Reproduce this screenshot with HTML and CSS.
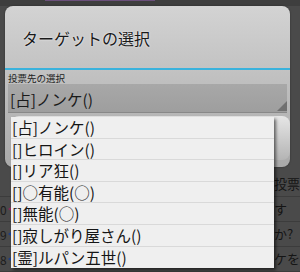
FILE: index.html
```html
<!DOCTYPE html>
<html lang="ja">
<head>
  <meta charset="UTF-8" />
  <title>ターゲットの選択</title>
  <link rel="stylesheet" href="styles.css">
</head>
<body>

  <div class="page">
    <div class="topbar"><span class="tab"></span></div>
    <div class="rows">
      <div class="row"><span class="num"></span><span class="note">投票</span></div>
      <div class="row"><span class="num">0<i class="tri pink"></i></span><span class="note">す</span></div>
      <div class="row"><span class="num">9<i class="tri blue"></i></span><span class="note">か?</span></div>
      <div class="row"><span class="num">8<i class="tri blue"></i></span><span class="note">ケを</span></div>
    </div>
  </div>

  <div class="dialog">
    <div class="dialog-title">ターゲットの選択</div>
    <div class="field-label">投票先の選択</div>
    <div class="spinner">[占]ノンケ()<span class="corner"></span></div>
    <div class="ok-button"></div>
  </div>

  <ul class="dropdown">
    <li>[占]ノンケ()</li>
    <li>[]ヒロイン()</li>
    <li>[]リア狂()</li>
    <li>[]○有能(○)</li>
    <li>[]無能(○)</li>
    <li>[]寂しがり屋さん()</li>
    <li>[霊]ルパン五世()</li>
  </ul>

</body>
</html>
```

FILE: styles.css
```css
body {
  margin: 0;
  width: 300px;
  height: 272px;
  overflow: hidden;
  background: #4a4a4a;
  font-family: "Noto Sans CJK JP", "Noto Sans", sans-serif;
  color: #111;
  position: relative;
}
.page {
  color: #1c1c1c;
}
.topbar {
  height: 6px;
  background: #3e3e3e;
}
.tab {
  display: block;
  margin-left: 45px;
  width: 110px;
  height: 1px;
  background: #6a4f7a;
}
.rows {
  padding-top: 166px;
}
.row {
  height: 24px;
  display: flex;
  justify-content: space-between;
  align-items: center;
  border-bottom: 1px solid #3c3c3c;
  font-size: 13px;
}
.num {
  display: flex;
  align-items: center;
  font-size: 12px;
}
.tri {
  width: 0;
  height: 0;
  border-top: 4px solid transparent;
  border-bottom: 4px solid transparent;
  border-right: 6px solid #8a2a5a;
  margin-left: 1px;
}
.tri.blue {
  border-right-color: #1d3f8a;
}
.note {
  width: 26px;
  line-height: 14px;
  color: #151515;
}
.dialog {
  position: absolute;
  left: 5px;
  top: 6px;
  width: 285px;
  height: 161px;
  border-radius: 8px;
  background: linear-gradient(#d3d3d3, #a9a9a9);
  box-shadow: 0 0 2px rgba(0,0,0,0.4);
}
.dialog-title {
  height: 61px;
  padding-left: 17px;
  display: flex;
  align-items: center;
  padding-top: 1px;
  font-size: 16px;
  color: #1a1a1a;
  text-shadow: 0 0 2px #fff;
  border-bottom: 2px solid #3ab2dc;
}
.field-label {
  font-size: 9.5px;
  padding: 2px 0 0 3px;
  height: 12px;
  line-height: 12px;
  color: #222;
}
.spinner {
  position: relative;
  height: 28px;
  margin: 0 3px;
  padding-left: 2px;
  font-size: 15.5px;
  line-height: 30px;
  color: #1a1a1a;
  border-bottom: 1px solid #888;
  background: linear-gradient(#a8a8a8, #9e9e9e);
}
.corner {
  position: absolute;
  right: 0;
  bottom: 1px;
  width: 0;
  height: 0;
  border-left: 10px solid transparent;
  border-bottom: 10px solid #707070;
}
.ok-button {
  margin: 3px 0 0 6px;
  width: 279px;
  height: 44px;
  border-radius: 8px;
  background: linear-gradient(#e6e6e6, #b4b4b4);
}
.dropdown {
  position: absolute;
  left: 11px;
  top: 117px;
  width: 263px;
  margin: 0;
  padding: 0;
  list-style: none;
  background: #efefef;
  box-shadow: 2px 2px 3px rgba(0,0,0,0.55);
}
.dropdown li {
  box-sizing: border-box;
  height: 21.6px;
  padding-left: 1px;
  font-size: 15.5px;
  line-height: 21px;
  color: #151515;
  border-bottom: 1px solid #d9d9d9;
  white-space: nowrap;
}
.dropdown li:last-child {
  border-bottom: none;
}
```
